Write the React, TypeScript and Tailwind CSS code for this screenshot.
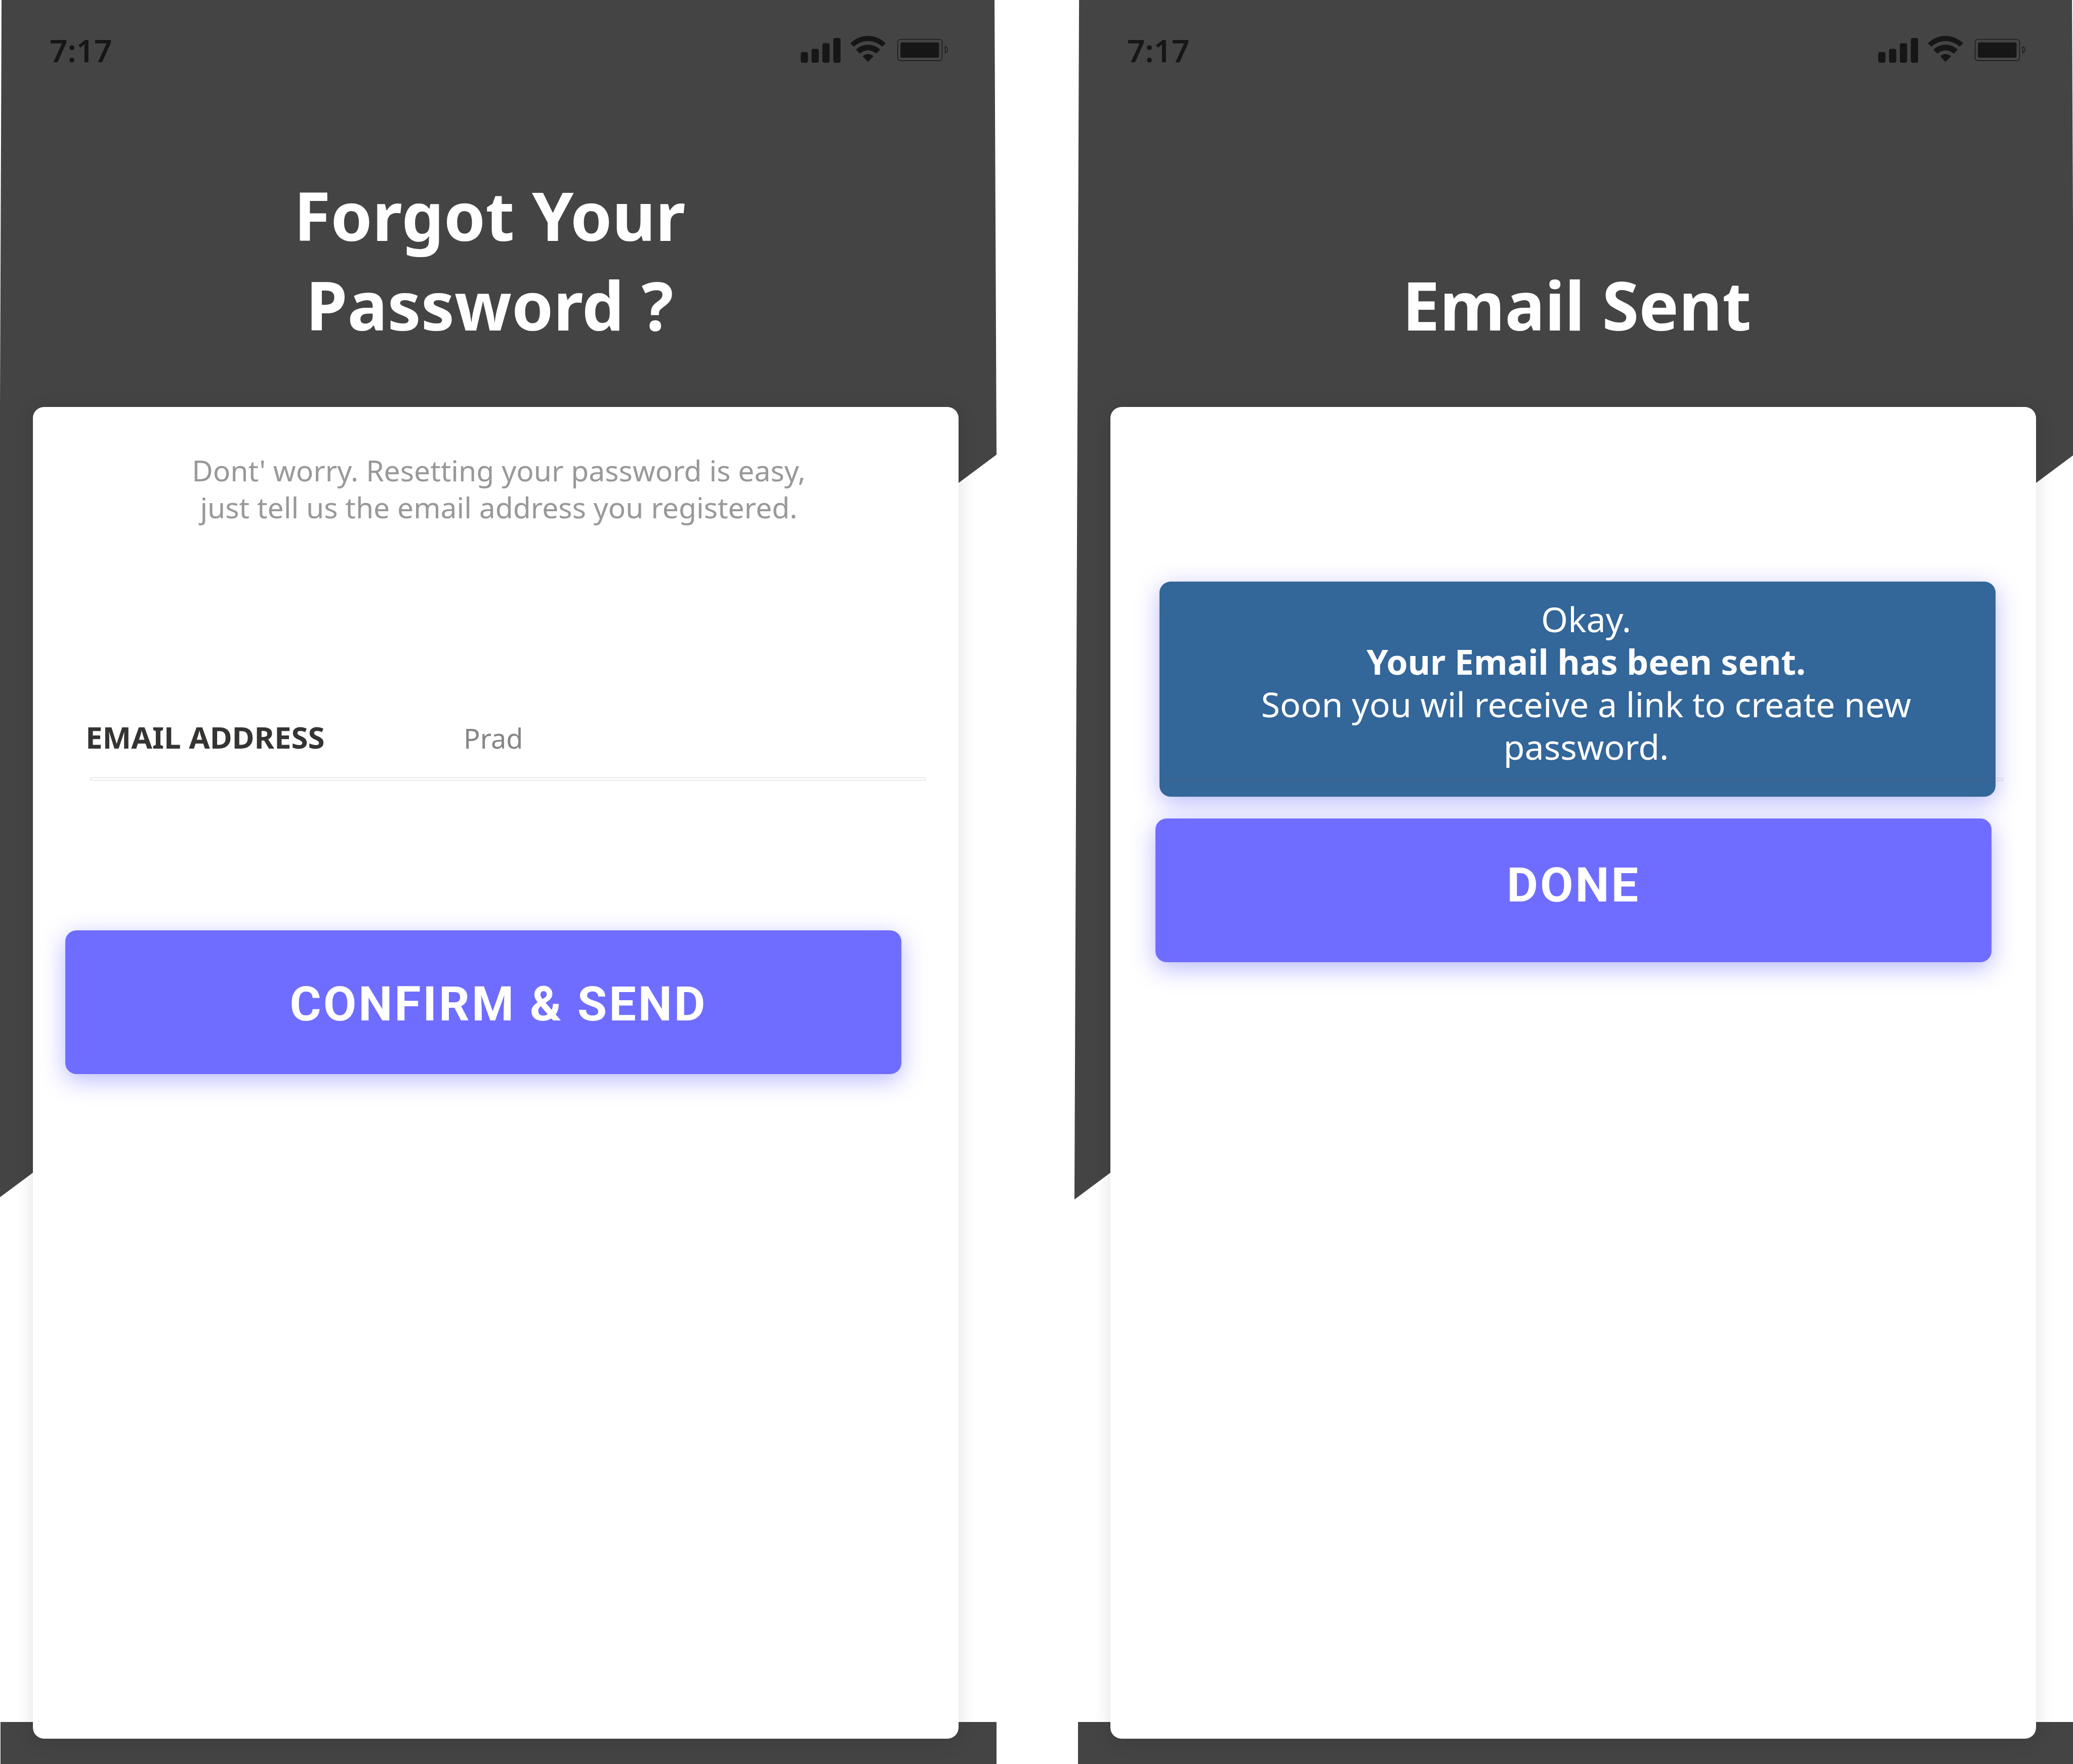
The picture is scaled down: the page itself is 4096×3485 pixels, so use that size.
import type { ReactNode } from "react";

function StatusIcons() {
  return (
    <svg
      className="h-[53px] w-[291px]"
      viewBox="135 87 1102 201"
      fill="#161616"
      role="img"
      aria-label="Signal, Wi-Fi and battery"
    >
      <rect x="135" y="207" width="54" height="81" rx="15" />
      <rect x="216" y="184" width="54" height="104" rx="15" />
      <rect x="297" y="141" width="54" height="147" rx="15" />
      <rect x="379" y="102" width="54" height="186" rx="15" />
      <path d="M507 142A186 186 0 0 1 771 142L745 168A152 152 0 0 0 533 168Z" />
      <path d="M548 190A128 128 0 0 1 730 190L700 220A86 86 0 0 0 579 220Z" />
      <path d="M599 240A55 55 0 0 1 680 240L639 281Z" />
      <rect x="861" y="113" width="333" height="159" rx="20" fill="none" stroke="#161616" strokeWidth="5" />
      <rect x="882" y="135" width="289" height="115" rx="12" />
      <path d="M1217 167C1229 170 1234 179 1234 190S1229 211 1217 214Z" fill="none" stroke="#161616" strokeWidth="5" />
    </svg>
  );
}

function Phone({ title, children }: { title: ReactNode; children: ReactNode }) {
  return (
    <section className="relative isolate flex flex-col pr-[73px] pb-[50px] pl-[65px]">
      {/* Slanted backdrop and footer strip */}
      <div className="absolute top-0 -right-[2px] -left-[6px] -z-10 h-[68%] bg-[#444444] [clip-path:polygon(0.46%_0,99.8%_0,100%_37.9%,0_100%)]" />
      <div className="absolute -right-[2px] bottom-0 left-[1px] -z-10 h-[83px] bg-[#444444]" />

      <header className="flex h-[804px] flex-col">
        <div className="flex items-start justify-between pt-[71px] pr-[21px] pl-[33px]">
          <span className="text-[62px] leading-[56px] font-semibold text-[#161616]">7:17</span>
          <StatusIcons />
        </div>
        <h1 className="mt-auto mb-[113px] text-center text-[132px] leading-[177px] font-bold text-white">
          {title}
        </h1>
      </header>

      <div className="relative flex-1 rounded-[22px] bg-white shadow-[0_6px_36px_rgba(0,0,0,0.12)]">{children}</div>
    </section>
  );
}

const glow = "shadow-[0_12px_48px_rgba(111,109,255,0.48)]";
const action =
  "block h-[284px] rounded-[22px] bg-[#6f6dff] font-['Roboto',sans-serif] text-[95px] font-bold tracking-[4px] text-white";

export default function App() {
  return (
    <main className="grid min-h-screen w-full grid-cols-2 gap-[162px] overflow-hidden bg-white font-['Noto_Sans',sans-serif]">
      <Phone
        title={
          <span className="block pr-[24px]">
            Forgot Your
            <br />
            Password ?
          </span>
        }
      >
        <form className="flex flex-col pt-[89px]" onSubmit={(e) => e.preventDefault()}>
          <p className="pl-[12px] text-center text-[57px] leading-[73px] text-[#999999]">
            Dont' worry. Resetting your password is easy,
            <br />
            just tell us the email address you registered.
          </p>
          <div className="mt-[377px] mr-[66px] ml-[104px] flex items-baseline">
            <label htmlFor="email" className="w-[747px] text-[60px] leading-[80px] font-bold text-[#353432]">
              EMAIL ADDRESS
            </label>
            <input
              id="email"
              type="text"
              defaultValue="Prad"
              className="h-[80px] min-w-0 flex-1 bg-transparent text-[54px] leading-[80px] text-[#868686] outline-none"
            />
          </div>
          <div className="mt-[38px] mr-[65px] ml-[113px] h-[6px] border border-[#666666]/25" />
          <button type="submit" className={`${action} ${glow} mt-[296px] mr-[113px] ml-[64px] pt-[8px] pl-[60px]`}>
            CONFIRM &amp; SEND
          </button>
        </form>
      </Phone>

      <Phone title={<span className="block pl-[14px]">Email Sent</span>}>
        <div className="flex flex-col pt-[345px]">
          <div
            role="status"
            className={`${glow} mr-[80px] ml-[97px] rounded-[22px] bg-[#336699] pt-[32px] pb-[57px] pl-[34px] text-center text-[68px] leading-[84px] text-white`}
          >
            Okay.
            <br />
            <strong className="font-bold">Your Email has been sent.</strong>
            <br />
            Soon you wil receive a link to create new
            <br />
            password.
          </div>
          <button type="button" className={`${action} ${glow} mt-[43px] mr-[88px] ml-[89px] pb-[20px]`}>
            DONE
          </button>
        </div>
        <div className="absolute top-[733px] right-[65px] left-[113px] h-[6px] border border-[#666666]/25" />
      </Phone>
    </main>
  );
}
